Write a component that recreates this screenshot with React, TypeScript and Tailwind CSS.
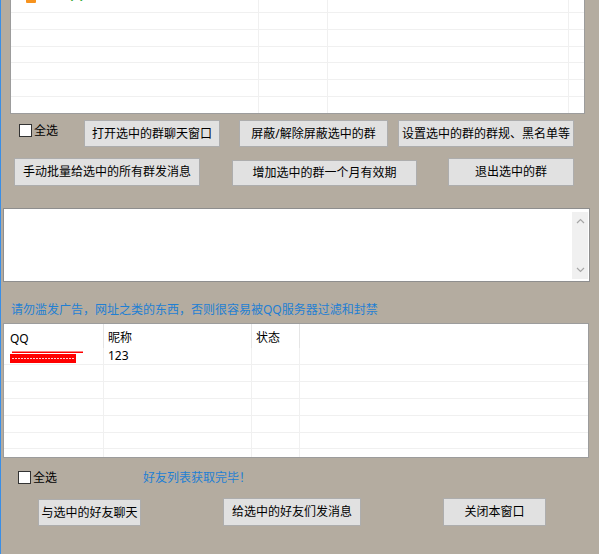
import React from "react";

const font = "font-['Noto_Sans','Noto_Sans_CJK_SC',sans-serif]";

const Check = ({ label }: { label: string }) => (
  <label className="flex items-center h-[13px]">
    <span className="w-[13px] h-[13px] border border-[#333] bg-white shrink-0" />
    <span className="ml-[2px] text-[12px] leading-[13px] text-black">{label}</span>
  </label>
);

const Btn = ({ text, className }: { text: string; className: string }) => (
  <button
    type="button"
    className={
      "flex items-center justify-center shrink-0 bg-[#e1e1e1] border border-[#adadad] text-[12px] leading-[14px] text-black " +
      className
    }
  >
    {text}
  </button>
);

// top (group) list: row heights in px, written out in full
const groupRows = ["h-[13px]", "h-[17px]", "h-[17px]", "h-[16px]", "h-[17px]", "h-[17px]", "h-[16px]"];
const friendRows = ["h-[17px]", "h-[17px]", "h-[17px]", "h-[17px]", "h-[17px]", "h-[16px]", "h-[8px]"];

const Redacted = () => (
  <svg width="73" height="12" viewBox="0 0 73 12" className="mt-[2px]" aria-hidden="true">
    <rect x="2" y="0.5" width="71" height="1.5" fill="#ff0000" />
    <rect x="0" y="3" width="66" height="9" fill="#ff0000" />
    <line x1="2" y1="7.5" x2="64" y2="7.5" stroke="#ffd0d0" strokeWidth="1" strokeDasharray="2 1" />
  </svg>
);

export default function App() {
  return (
    <div className={"w-[599px] h-[554px] bg-[#b4aca0] border-l border-[#3a8ee6] flex flex-col overflow-hidden " + font}>
      {/* group list (scrolled, top clipped) */}
      <div className="ml-[9px] w-[575px] h-[114px] shrink-0 bg-white border-x border-b border-[#9c9c9c] flex flex-col">
        {groupRows.map((h, i) => (
          <div
            key={i}
            className={h + " flex shrink-0 " + (i < groupRows.length - 1 ? "border-b border-[#f0f0f0]" : "")}
          >
            <div className="w-[248px] border-r border-[#f0f0f0] flex items-start overflow-hidden">
              {i === 0 && (
                <>
                  <span className="ml-[15px] -mt-[13px] w-[10px] h-[16px] bg-[#f7931e] rounded-[1px]" />
                  <span className="ml-[29px] -mt-[11px] text-[12px] leading-[12px] text-[#2aa52a]">
                    QQ群号123456789
                  </span>
                </>
              )}
            </div>
            <div className="w-[69px] border-r border-[#f0f0f0]" />
            <div className="w-[241px] border-r border-[#f0f0f0]" />
            <div className="flex-1" />
          </div>
        ))}
      </div>

      {/* buttons row 1 */}
      <div className="mt-[6px] h-[27px] flex items-start shrink-0">
        <div className="ml-[18px] w-[65px] mt-[4px]">
          <Check label="全选" />
        </div>
        <Btn text="打开选中的群聊天窗口" className="w-[136px] h-[27px]" />
        <Btn text="屏蔽/解除屏蔽选中的群" className="ml-[19px] w-[149px] h-[27px]" />
        <Btn text="设置选中的群的群规、黑名单等" className="ml-[10px] w-[176px] h-[27px]" />
      </div>

      {/* buttons row 2 */}
      <div className="mt-[11px] h-[28px] flex items-start shrink-0">
        <Btn text="手动批量给选中的所有群发消息" className="ml-[13px] w-[186px] h-[28px]" />
        <Btn text="增加选中的群一个月有效期" className="ml-[32px] mt-[2px] w-[185px] h-[26px]" />
        <Btn text="退出选中的群" className="ml-[31px] w-[126px] h-[28px]" />
      </div>

      {/* message box */}
      <div className="mt-[22px] ml-[2px] w-[587px] h-[74px] shrink-0 bg-white border border-[#8e8e8e] flex justify-end">
        <div className="w-[16px] mt-[3px] mb-[2px] mr-[1px] bg-[#f0f0f0] flex flex-col items-center justify-between py-[6px]">
          <svg width="9" height="6" viewBox="0 0 9 6" aria-hidden="true">
            <polyline points="1,5 4.5,1.5 8,5" fill="none" stroke="#a6a6a6" strokeWidth="1.2" />
          </svg>
          <svg width="9" height="6" viewBox="0 0 9 6" aria-hidden="true">
            <polyline points="1,1 4.5,4.5 8,1" fill="none" stroke="#a6a6a6" strokeWidth="1.2" />
          </svg>
        </div>
      </div>

      <div className="mt-[20px] ml-[10px] h-[16px] text-[12px] leading-[16px] text-[#1f7fd3] shrink-0">
        请勿滥发广告，网址之类的东西，否则很容易被QQ服务器过滤和封禁
      </div>

      {/* friend list */}
      <div className="mt-[5px] ml-[2px] w-[586px] h-[135px] shrink-0 bg-white border border-[#9c9c9c] flex flex-col">
        <div className="h-[24px] flex shrink-0 text-[12px] leading-[14px] text-black">
          <div className="w-[100px] border-r border-[#e5e5e5] pl-[6px] pt-[8px]">QQ</div>
          <div className="w-[148px] border-r border-[#e5e5e5] pl-[4px] pt-[7px]">昵称</div>
          <div className="w-[48px] border-r border-[#e5e5e5] pl-[4px] pt-[7px]">状态</div>
          <div className="flex-1" />
        </div>
        {friendRows.map((h, i) => (
          <div
            key={i}
            className={h + " flex shrink-0 text-[12px] leading-[14px] text-black " + (i < friendRows.length - 1 ? "border-b border-[#f0f0f0]" : "")}
          >
            <div className="w-[100px] border-r border-[#f0f0f0] pl-[6px] flex items-center overflow-hidden">
              {i === 0 && <Redacted />}
            </div>
            <div className="w-[148px] border-r border-[#f0f0f0] pl-[4px] flex items-center overflow-hidden">
              {i === 0 && "123"}
            </div>
            <div className="w-[48px] border-r border-[#f0f0f0]" />
            <div className="flex-1" />
          </div>
        ))}
      </div>

      {/* bottom controls */}
      <div className="mt-[13px] h-[13px] flex items-center shrink-0">
        <div className="ml-[17px] w-[125px]">
          <Check label="全选" />
        </div>
        <span className="text-[12px] leading-[13px] text-[#1f7fd3]">好友列表获取完毕！</span>
      </div>

      <div className="mt-[14px] h-[28px] flex items-start shrink-0">
        <Btn text="与选中的好友聊天" className="ml-[37px] mt-[1px] w-[103px] h-[27px]" />
        <Btn text="给选中的好友们发消息" className="ml-[82px] w-[138px] h-[28px]" />
        <Btn text="关闭本窗口" className="ml-[82px] w-[103px] h-[28px]" />
      </div>
    </div>
  );
}
